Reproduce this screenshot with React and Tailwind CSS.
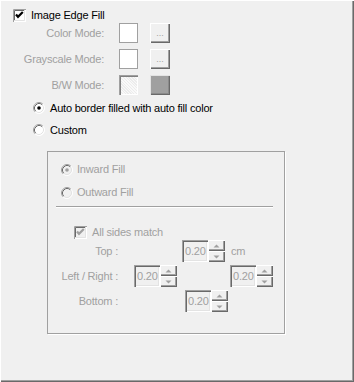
import React from "react";

function Check({ disabled }) {
  return (
    <svg width="13" height="13" viewBox="0 0 13 13" className="shrink-0 block">
      <rect x="0" y="0" width="13" height="13" fill="#ffffff" />
      <rect x="1" y="1" width="11" height="11" fill={disabled ? "#f0f0f0" : "#ffffff"} />
      <path d="M0.5 13 V0.5 H13" stroke="#a0a0a0" fill="none" />
      <path d="M1.5 12 V1.5 H12" stroke="#696969" fill="none" />
      <path d="M1 11.5 H11.5 V1" stroke="#e3e3e3" fill="none" />
      <path d="M3 5.5 L5 7.8 L9.8 3" stroke={disabled ? "#a0a0a0" : "#000"} strokeWidth="2.2" fill="none" />
    </svg>
  );
}

function Radio({ checked, disabled }) {
  return (
    <svg width="12" height="12" viewBox="0 0 12 12" className="shrink-0 block">
      <circle cx="6" cy="6" r="5.5" fill={disabled ? "#f0f0f0" : "#ffffff"} />
      <path d="M2.11 9.89 A5.5 5.5 0 0 1 9.89 2.11" stroke="#a0a0a0" fill="none" />
      <path d="M9.89 2.11 A5.5 5.5 0 0 1 2.11 9.89" stroke="#ffffff" fill="none" />
      <path d="M2.82 9.18 A4.5 4.5 0 0 1 9.18 2.82" stroke="#696969" fill="none" />
      <path d="M9.18 2.82 A4.5 4.5 0 0 1 2.82 9.18" stroke="#e3e3e3" fill="none" />
      {checked && <circle cx="6" cy="6" r="1.8" fill={disabled ? "#a0a0a0" : "#000"} />}
    </svg>
  );
}

function DotsButton() {
  return (
    <div className="w-[20px] h-[20px] bg-[#f0f0f0] shadow-[inset_1px_1px_0_#ffffff,inset_-1px_-1px_0_#696969,inset_-2px_-2px_0_#a0a0a0] flex items-end justify-center pb-[5px]">
      <span className="text-[9px] leading-[9px] text-[#a0a0a0] tracking-[0px]">...</span>
    </div>
  );
}

function SpinBtn({ up }) {
  return (
    <div className="w-[17px] h-[11px] bg-[#f0f0f0] shadow-[inset_1px_1px_0_#ffffff,inset_-1px_-1px_0_#696969,inset_-2px_-2px_0_#a0a0a0] flex items-center justify-center">
      <svg width="7" height="4" viewBox="0 0 7 4" className="block">
        {up ? (
          <path d="M3.5 0.5 L6.5 3.5 L0.5 3.5 Z" fill="#a0a0a0" />
        ) : (
          <path d="M0.5 0.5 L6.5 0.5 L3.5 3.5 Z" fill="#a0a0a0" />
        )}
      </svg>
    </div>
  );
}

function Spinner() {
  return (
    <div className="flex h-[22px] shrink-0">
      <div className="w-[26px] h-[22px] bg-[#f0f0f0] shadow-[inset_1px_1px_0_#a0a0a0,inset_2px_2px_0_#696969,inset_-1px_-1px_0_#ffffff,inset_-2px_-2px_0_#e3e3e3] flex items-center pl-[3px] text-[#a0a0a0]">
        0.20
      </div>
      <div className="flex flex-col">
        <SpinBtn up />
        <SpinBtn />
      </div>
    </div>
  );
}

export default function App() {
  const gray = "text-[#a0a0a0]";
  return (
    <div
      className="w-[354px] h-[382px] bg-[#f0f0f0] pt-[9px] text-[11px] leading-[13px] text-black tracking-[-0.2px] shadow-[inset_1px_1px_0_#ffffff,inset_-1px_-1px_0_#696969,inset_-2px_-2px_0_#a0a0a0] overflow-hidden"
      style={{ fontFamily: '"Liberation Sans", Arial, sans-serif' }}
    >
      <div className="flex items-center h-[13px] pl-[13px]">
        <Check />
        <span className="ml-[5px]">Image Edge Fill</span>
      </div>

      <div className="mt-[1px] flex flex-col gap-[6px]">
        <div className="flex items-center h-[20px]">
          <span className={`w-[104px] text-right ${gray}`}>Color Mode:</span>
          <div className="ml-[15px] w-[19px] h-[20px] bg-white border border-[#a0a0a0]" />
          <div className="ml-[12px]">
            <DotsButton />
          </div>
        </div>
        <div className="flex items-center h-[20px]">
          <span className={`w-[104px] text-right ${gray}`}>Grayscale Mode:</span>
          <div className="ml-[15px] w-[19px] h-[20px] bg-white border border-[#a0a0a0]" />
          <div className="ml-[12px]">
            <DotsButton />
          </div>
        </div>
        <div className="flex items-center h-[20px]">
          <span className={`w-[104px] text-right ${gray}`}>B/W Mode:</span>
          <div className="ml-[15px] w-[19px] h-[20px] bg-[#f7f7f7] bg-[repeating-linear-gradient(45deg,#f9f9f9_0px,#f9f9f9_1px,#ececec_1px,#ececec_2px)] shadow-[inset_1px_1px_0_#a0a0a0,inset_2px_2px_0_#808080,inset_-1px_-1px_0_#ffffff]" />
          <div className="ml-[12px] w-[20px] h-[20px] bg-[#a0a0a0] shadow-[inset_1px_1px_0_#e3e3e3,inset_-1px_-1px_0_#696969,inset_-2px_-2px_0_#8a8a8a]" />
        </div>
      </div>

      <div className="mt-[2px]">
        <div className="flex items-center h-[22px] pl-[33px]">
          <Radio checked />
          <span className="ml-[5px]">Auto border filled with auto fill color</span>
        </div>
        <div className="flex items-center h-[22px] pl-[33px]">
          <Radio />
          <span className="ml-[5px]">Custom</span>
        </div>
      </div>

      <div className="mt-[10px] ml-[47px] w-[238px] h-[183px] border border-[#a0a0a0] shadow-[1px_1px_0_#ffffff] pt-[6px]">
        <div className="flex items-center h-[23px] pl-[13px]">
          <Radio checked disabled />
          <span className={`ml-[4px] ${gray}`}>Inward Fill</span>
        </div>
        <div className="flex items-center h-[23px] pl-[13px]">
          <Radio disabled />
          <span className={`ml-[4px] ${gray}`}>Outward Fill</span>
        </div>
        <div className="mt-[2px] ml-[8px] w-[217px] h-[1px] bg-[#a0a0a0] shadow-[0_1px_0_#ffffff]" />

        <div className="mt-[19px] flex items-center h-[13px] pl-[26px]">
          <Check disabled />
          <span className={`ml-[5px] ${gray}`}>All sides match</span>
        </div>

        <div className="mt-[1px] flex items-center h-[22px]">
          <span className={`w-[70px] text-right ${gray}`}>Top :</span>
          <div className="ml-[64px]">
            <Spinner />
          </div>
          <span className={`ml-[6px] ${gray}`}>cm</span>
        </div>
        <div className="mt-[3px] flex items-center h-[22px]">
          <span className={`w-[70px] text-right ${gray}`}>Left / Right :</span>
          <div className="ml-[16px]">
            <Spinner />
          </div>
          <div className="ml-[53px]">
            <Spinner />
          </div>
        </div>
        <div className="mt-[3px] flex items-center h-[22px]">
          <span className={`w-[70px] text-right ${gray}`}>Bottom :</span>
          <div className="ml-[67px]">
            <Spinner />
          </div>
        </div>
      </div>
    </div>
  );
}
